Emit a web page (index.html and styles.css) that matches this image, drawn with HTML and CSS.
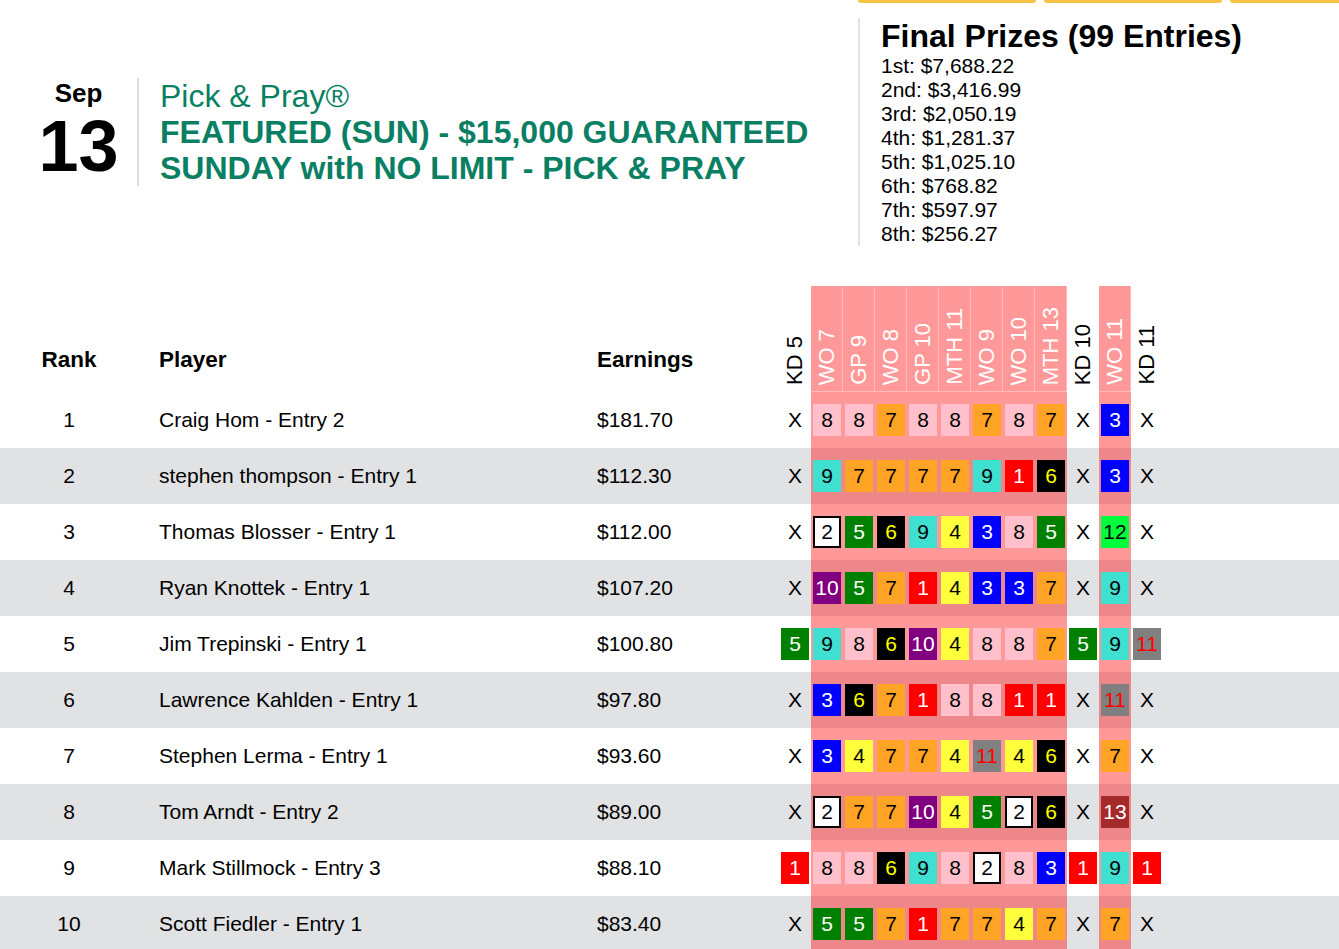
FILE: index.html
```html
<!DOCTYPE html>
<html>
<head>
<meta charset="utf-8">
<title>Pick &amp; Pray Results</title>
<link rel="stylesheet" href="styles.css">
</head>
<body>
<div class="tabs"><div class="tab"></div><div class="tab"></div><div class="tab last"></div></div>
<div class="top">
  <div class="left">
    <div class="date"><div class="mon">Sep</div><div class="day">13</div></div>
    <div class="title">
      <div class="brand">Pick &amp; Pray®</div>
      <div class="name">FEATURED (SUN) - $15,000 GUARANTEED</div>
      <div class="name">SUNDAY with NO LIMIT - PICK &amp; PRAY</div>
    </div>
  </div>
  <div class="prizes">
    <div class="ptitle">Final Prizes (99 Entries)</div>
    <div>1st: $7,688.22</div>
    <div>2nd: $3,416.99</div>
    <div>3rd: $2,050.19</div>
    <div>4th: $1,281.37</div>
    <div>5th: $1,025.10</div>
    <div>6th: $768.82</div>
    <div>7th: $597.97</div>
    <div>8th: $256.27</div>
  </div>
</div>
<table class="board">
<colgroup>
<col class="w-rank"><col class="w-player"><col class="w-earn">
<col class="w-pick"><col class="w-pick"><col class="w-pick"><col class="w-pick"><col class="w-pick"><col class="w-pick"><col class="w-pick"><col class="w-pick"><col class="w-pick"><col class="w-pick"><col class="w-pick"><col class="w-pick">
<col>
</colgroup>
<thead>
<tr>
<th class="h-rank">Rank</th><th class="h-left">Player</th><th class="h-left">Earnings</th>
<th class="vh"><span class="vl">KD 5</span></th>
<th class="vh p"><span class="vl">WO 7</span></th>
<th class="vh p"><span class="vl">GP 9</span></th>
<th class="vh p"><span class="vl">WO 8</span></th>
<th class="vh p"><span class="vl">GP 10</span></th>
<th class="vh p"><span class="vl">MTH 11</span></th>
<th class="vh p"><span class="vl">WO 9</span></th>
<th class="vh p"><span class="vl">WO 10</span></th>
<th class="vh p"><span class="vl">MTH 13</span></th>
<th class="vh"><span class="vl">KD 10</span></th>
<th class="vh p"><span class="vl">WO 11</span></th>
<th class="vh"><span class="vl">KD 11</span></th>
<th></th>
</tr>
</thead>
<tbody>
<tr>
<td class="rank">1</td><td class="txt">Craig Hom - Entry 2</td><td class="txt">$181.70</td>
<td class="k">X</td>
<td class="p"><span class="b c8">8</span></td><td class="p"><span class="b c8">8</span></td><td class="p"><span class="b c7">7</span></td><td class="p"><span class="b c8">8</span></td><td class="p"><span class="b c8">8</span></td><td class="p"><span class="b c7">7</span></td><td class="p"><span class="b c8">8</span></td><td class="p"><span class="b c7">7</span></td>
<td class="k">X</td><td class="p"><span class="b c3">3</span></td><td class="k">X</td><td></td>
</tr>
<tr class="alt">
<td class="rank">2</td><td class="txt">stephen thompson - Entry 1</td><td class="txt">$112.30</td>
<td class="k">X</td>
<td class="p"><span class="b c9">9</span></td><td class="p"><span class="b c7">7</span></td><td class="p"><span class="b c7">7</span></td><td class="p"><span class="b c7">7</span></td><td class="p"><span class="b c7">7</span></td><td class="p"><span class="b c9">9</span></td><td class="p"><span class="b c1">1</span></td><td class="p"><span class="b c6">6</span></td>
<td class="k">X</td><td class="p"><span class="b c3">3</span></td><td class="k">X</td><td></td>
</tr>
<tr>
<td class="rank">3</td><td class="txt">Thomas Blosser - Entry 1</td><td class="txt">$112.00</td>
<td class="k">X</td>
<td class="p"><span class="b c2">2</span></td><td class="p"><span class="b c5">5</span></td><td class="p"><span class="b c6">6</span></td><td class="p"><span class="b c9">9</span></td><td class="p"><span class="b c4">4</span></td><td class="p"><span class="b c3">3</span></td><td class="p"><span class="b c8">8</span></td><td class="p"><span class="b c5">5</span></td>
<td class="k">X</td><td class="p"><span class="b c12">12</span></td><td class="k">X</td><td></td>
</tr>
<tr class="alt">
<td class="rank">4</td><td class="txt">Ryan Knottek - Entry 1</td><td class="txt">$107.20</td>
<td class="k">X</td>
<td class="p"><span class="b c10">10</span></td><td class="p"><span class="b c5">5</span></td><td class="p"><span class="b c7">7</span></td><td class="p"><span class="b c1">1</span></td><td class="p"><span class="b c4">4</span></td><td class="p"><span class="b c3">3</span></td><td class="p"><span class="b c3">3</span></td><td class="p"><span class="b c7">7</span></td>
<td class="k">X</td><td class="p"><span class="b c9">9</span></td><td class="k">X</td><td></td>
</tr>
<tr>
<td class="rank">5</td><td class="txt">Jim Trepinski - Entry 1</td><td class="txt">$100.80</td>
<td class="k"><span class="b c5">5</span></td>
<td class="p"><span class="b c9">9</span></td><td class="p"><span class="b c8">8</span></td><td class="p"><span class="b c6">6</span></td><td class="p"><span class="b c10">10</span></td><td class="p"><span class="b c4">4</span></td><td class="p"><span class="b c8">8</span></td><td class="p"><span class="b c8">8</span></td><td class="p"><span class="b c7">7</span></td>
<td class="k"><span class="b c5">5</span></td><td class="p"><span class="b c9">9</span></td><td class="k"><span class="b c11">11</span></td><td></td>
</tr>
<tr class="alt">
<td class="rank">6</td><td class="txt">Lawrence Kahlden - Entry 1</td><td class="txt">$97.80</td>
<td class="k">X</td>
<td class="p"><span class="b c3">3</span></td><td class="p"><span class="b c6">6</span></td><td class="p"><span class="b c7">7</span></td><td class="p"><span class="b c1">1</span></td><td class="p"><span class="b c8">8</span></td><td class="p"><span class="b c8">8</span></td><td class="p"><span class="b c1">1</span></td><td class="p"><span class="b c1">1</span></td>
<td class="k">X</td><td class="p"><span class="b c11">11</span></td><td class="k">X</td><td></td>
</tr>
<tr>
<td class="rank">7</td><td class="txt">Stephen Lerma - Entry 1</td><td class="txt">$93.60</td>
<td class="k">X</td>
<td class="p"><span class="b c3">3</span></td><td class="p"><span class="b c4">4</span></td><td class="p"><span class="b c7">7</span></td><td class="p"><span class="b c7">7</span></td><td class="p"><span class="b c4">4</span></td><td class="p"><span class="b c11">11</span></td><td class="p"><span class="b c4">4</span></td><td class="p"><span class="b c6">6</span></td>
<td class="k">X</td><td class="p"><span class="b c7">7</span></td><td class="k">X</td><td></td>
</tr>
<tr class="alt">
<td class="rank">8</td><td class="txt">Tom Arndt - Entry 2</td><td class="txt">$89.00</td>
<td class="k">X</td>
<td class="p"><span class="b c2">2</span></td><td class="p"><span class="b c7">7</span></td><td class="p"><span class="b c7">7</span></td><td class="p"><span class="b c10">10</span></td><td class="p"><span class="b c4">4</span></td><td class="p"><span class="b c5">5</span></td><td class="p"><span class="b c2">2</span></td><td class="p"><span class="b c6">6</span></td>
<td class="k">X</td><td class="p"><span class="b c13">13</span></td><td class="k">X</td><td></td>
</tr>
<tr>
<td class="rank">9</td><td class="txt">Mark Stillmock - Entry 3</td><td class="txt">$88.10</td>
<td class="k"><span class="b c1">1</span></td>
<td class="p"><span class="b c8">8</span></td><td class="p"><span class="b c8">8</span></td><td class="p"><span class="b c6">6</span></td><td class="p"><span class="b c9">9</span></td><td class="p"><span class="b c8">8</span></td><td class="p"><span class="b c2">2</span></td><td class="p"><span class="b c8">8</span></td><td class="p"><span class="b c3">3</span></td>
<td class="k"><span class="b c1">1</span></td><td class="p"><span class="b c9">9</span></td><td class="k"><span class="b c1">1</span></td><td></td>
</tr>
<tr class="alt">
<td class="rank">10</td><td class="txt">Scott Fiedler - Entry 1</td><td class="txt">$83.40</td>
<td class="k">X</td>
<td class="p"><span class="b c5">5</span></td><td class="p"><span class="b c5">5</span></td><td class="p"><span class="b c7">7</span></td><td class="p"><span class="b c1">1</span></td><td class="p"><span class="b c7">7</span></td><td class="p"><span class="b c7">7</span></td><td class="p"><span class="b c4">4</span></td><td class="p"><span class="b c7">7</span></td>
<td class="k">X</td><td class="p"><span class="b c7">7</span></td><td class="k">X</td><td></td>
</tr>
</tbody>
</table>
</body>
</html>
```
FILE: styles.css
```css
html, body {
  margin: 0;
  padding: 0;
  background: #fff;
}
body {
  font-family: "Liberation Sans", Arial, Helvetica, sans-serif;
  color: #000;
  font-size: 21px;
}
.tabs {
  display: flex;
  gap: 8px;
  margin-left: 858px;
  height: 3px;
}
.tab {
  width: 178px;
  background: #f6c244;
  border-radius: 0 0 4px 4px;
}
.tab.last {
  flex: 1;
  border-radius: 0 0 0 4px;
}
.top {
  display: flex;
  align-items: center;
  margin-top: 15px;
}
.left {
  width: 838px;
  padding-left: 20px;
  display: flex;
  align-items: stretch;
}
.date {
  width: 117px;
  border-right: 2px solid #dedede;
  text-align: center;
  font-weight: bold;
}
.mon {
  font-size: 26px;
  line-height: 30px;
}
.day {
  font-size: 72px;
  line-height: 77px;
}
.title {
  padding-left: 21px;
  color: #0a7f63;
  font-size: 32px;
  line-height: 36px;
  white-space: nowrap;
}
.name {
  font-weight: bold;
}
.prizes {
  border-left: 2px solid #e2e2e2;
  padding-left: 21px;
  font-size: 21px;
  line-height: 24px;
}
.ptitle {
  font-size: 32px;
  line-height: 36px;
  font-weight: bold;
}
.board {
  margin-top: 40px;
  width: 100%;
  table-layout: fixed;
  border-collapse: separate;
  border-spacing: 0;
}
.w-rank { width: 138px; }
.w-player { width: 438px; }
.w-earn { width: 203px; }
.w-pick { width: 32px; }
.board thead tr {
  height: 106px;
}
.board th {
  padding: 0;
  vertical-align: bottom;
  font-size: 22.5px;
  font-weight: bold;
}
.h-rank {
  text-align: center;
  padding-bottom: 19px !important;
}
.h-left {
  text-align: left;
  padding-left: 21px !important;
  padding-bottom: 19px !important;
}
.board th.vh {
  text-align: center;
  line-height: 0;
  padding-bottom: 7px;
  font-weight: normal;
  font-size: 22px;
}
.vl {
  display: inline-block;
  writing-mode: vertical-rl;
  transform: rotate(180deg);
  line-height: 24px;
  vertical-align: bottom;
  white-space: nowrap;
}
.board th.p {
  color: #fff;
  box-shadow: inset -1px 0 rgba(255, 255, 255, 0.3), inset 0 -1px rgba(255, 255, 255, 0.35);
}
.p {
  background: rgba(255, 0, 0, 0.4);
}
.board tbody tr {
  height: 56px;
}
.board tr.alt {
  background: #e1e2e4;
}
.board td {
  padding: 0;
  vertical-align: middle;
}
.rank {
  text-align: center;
}
.txt {
  padding-left: 21px !important;
  white-space: nowrap;
}
.k, .p {
  text-align: center;
}
.b {
  display: inline-block;
  width: 28px;
  height: 32px;
  line-height: 32px;
  vertical-align: middle;
  text-align: center;
  box-sizing: border-box;
}
.c1 { background: #ff0000; color: #fff; }
.c2 { background: #fff; color: #000; border: 2px solid #000; line-height: 28px; }
.c3 { background: #0000ff; color: #fff; }
.c4 { background: #ffff3c; color: #000; }
.c5 { background: #008000; color: #fff; }
.c6 { background: #000; color: #ffff00; }
.c7 { background: #ffa424; color: #000; }
.c8 { background: #ffc0cb; color: #000; }
.c9 { background: #40e0d0; color: #000; }
.c10 { background: #800080; color: #fff; }
.c11 { background: #808080; color: #ff0000; }
.c12 { background: #00ff3c; color: #000; }
.c13 { background: #a52a2a; color: #fff; }
```
